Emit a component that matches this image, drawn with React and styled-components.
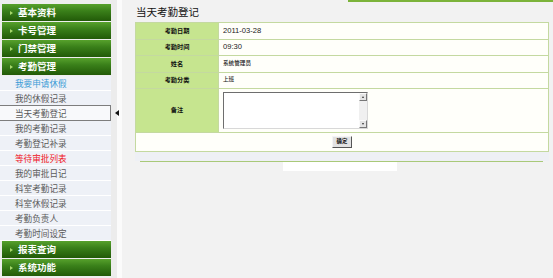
import React from "react";
import styled, { createGlobalStyle } from "styled-components";

const Global = createGlobalStyle`
  html, body { margin: 0; padding: 0; background: #f2f2f2; }
  body { font-family: "Noto Sans CJK SC", "Liberation Sans", sans-serif; }
`;

const Page = styled.div`
  display: flex;
  width: 553px;
  height: 278px;
  overflow: hidden;
  background: #f2f2f2;
`;

const Sidebar = styled.div`
  width: 111px;
  flex: none;
  padding-top: 4px;
  background: #eeeeee;
  display: flex;
  flex-direction: column;
`;

const Header = styled.div`
  height: 17px;
  margin-bottom: 1px;
  margin-left: 2px;
  display: flex;
  align-items: center;
  gap: 5px;
  padding-left: 8px;
  background: linear-gradient(to bottom, #57a12c 0%, #3a801a 40%, #225a08 100%);
  color: #fff;
  font-size: 9.5px;
  font-weight: 700;
  line-height: 1;
`;

const Bullet = styled.span`
  width: 0;
  height: 0;
  border-top: 2.5px solid transparent;
  border-bottom: 2.5px solid transparent;
  border-left: 3px solid #a7d86b;
`;

const ItemList = styled.div`
  display: flex;
  flex-direction: column;
`;

const Item = styled.div`
  height: 14px;
  padding-left: 15px;
  display: flex;
  align-items: center;
  font-size: 8.6px;
  line-height: 1;
  color: ${(p) => p.$color || "#5a5a5a"};
  background: ${(p) => (p.$active ? "#f8f9fb" : "#eef1f7")};
  border-bottom: 1px solid ${(p) => (p.$active ? "#7d7d7d" : "#ffffff")};
  border-top: ${(p) => (p.$active ? "1px solid #7d7d7d" : "none")};
  border-right: ${(p) => (p.$active ? "1px solid #7d7d7d" : "none")};
  margin-top: ${(p) => (p.$active ? "-1px" : "0")};
  box-sizing: content-box;
`;

const Splitter = styled.div`
  width: 11px;
  flex: none;
  display: flex;
  background: linear-gradient(to right, #ececec 0 6px, #fbfbfb 6px 100%);
  position: relative;
`;

const Arrow = styled.span`
  position: absolute;
  left: 4px;
  top: 110px;
  width: 0;
  height: 0;
  border-top: 3px solid transparent;
  border-bottom: 3px solid transparent;
  border-right: 4px solid #111;
`;

const Main = styled.div`
  flex: 1;
  display: flex;
  flex-direction: column;
  padding-right: 4px;
`;

const TopBar = styled.div`
  height: 2px;
  display: flex;
  justify-content: flex-end;
  margin-right: -4px;
`;

const TopGreen = styled.div`
  width: 205px;
  background: #7cb33a;
`;

const Title = styled.div`
  height: 20px;
  padding-left: 14px;
  display: flex;
  align-items: center;
  font-size: 10.5px;
  color: #111;
  line-height: 1;
`;

const Table = styled.div`
  margin-left: 13px;
  border: 1px solid #c4d9a0;
  display: grid;
  grid-template-columns: 82px 1fr;
  background: #c4d9a0;
  gap: 1px;
`;

const Label = styled.div`
  height: ${(p) => p.$h || 15.5}px;
  background: #c6e58f;
  display: flex;
  align-items: center;
  justify-content: center;
  font-size: 6.2px;
  font-weight: 700;
  color: #111;
  line-height: 1;
`;

const Value = styled.div`
  height: ${(p) => p.$h || 15.5}px;
  background: #fffffa;
  display: flex;
  align-items: center;
  padding-left: 4px;
  font-size: ${(p) => (p.$latin ? "7.6px" : "5.6px")};
  font-weight: ${(p) => (p.$latin ? 400 : 500)};
  font-family: ${(p) => (p.$latin ? '"Liberation Sans", sans-serif' : '"Noto Sans CJK SC", sans-serif')};
  color: #222;
  line-height: 1;
`;

const ButtonRow = styled.div`
  grid-column: 1 / -1;
  height: 18px;
  background: #fffffa;
  display: flex;
  align-items: center;
  justify-content: center;
`;

const Button = styled.div`
  width: 18px;
  height: 10px;
  background: #e2e2e2;
  border: 1px solid;
  border-color: #f4f4f4 #555 #555 #f4f4f4;
  font-size: 5.4px;
  font-weight: 700;
  color: #111;
  display: flex;
  align-items: center;
  justify-content: center;
  line-height: 1;
`;

const TextArea = styled.div`
  width: 143px;
  height: 35px;
  border: 1px solid;
  border-color: #6e6e6e #d8d8d8 #d8d8d8 #6e6e6e;
  background: #fff;
  display: flex;
  justify-content: flex-end;
`;

const Scroll = styled.div`
  width: 8px;
  display: flex;
  flex-direction: column;
  justify-content: space-between;
  background: #f0f0f0;
`;

const ScrollBtn = styled.div`
  height: 8px;
  background: #e4e4e4;
  border: 1px solid;
  border-color: #fafafa #777 #777 #fafafa;
  box-sizing: border-box;
  display: flex;
  align-items: center;
  justify-content: center;
  &::after {
    content: "";
    border-left: 1.5px solid transparent;
    border-right: 1.5px solid transparent;
    ${(p) => (p.$down ? "border-top: 2px solid #333;" : "border-bottom: 2px solid #333;")}
  }
`;

const Band = styled.div`
  height: 9px;
  margin-left: 13px;
  background: #eef0f5;
`;

const Rule = styled.div`
  height: 1px;
  margin-left: 18px;
  margin-right: 6px;
  background: #a9c979;
`;

const Footer = styled.div`
  width: 114px;
  height: 9px;
  margin-left: 161px;
  background: #ffffff;
`;

const groupsTop = ["基本资料", "卡号管理", "门禁管理", "考勤管理"];
const items = [
  { t: "我要申请休假", c: "#3a9bd6" },
  { t: "我的休假记录" },
  { t: "当天考勤登记", active: true },
  { t: "我的考勤记录" },
  { t: "考勤登记补录" },
  { t: "等待审批列表", c: "#f0141e" },
  { t: "我的审批日记" },
  { t: "科室考勤记录" },
  { t: "科室休假记录" },
  { t: "考勤负责人" },
  { t: "考勤时间设定" },
];
const groupsBottom = ["报表查询", "系统功能"];

const rows = [
  { l: "考勤日期", v: "2011-03-28", latin: true },
  { l: "考勤时间", v: "09:30", latin: true },
  { l: "姓名", v: "系统管理员" },
  { l: "考勤分类", v: "上班" },
];

export default function App() {
  return (
    <>
      <Global />
      <Page>
        <Sidebar>
          {groupsTop.map((g) => (
            <Header key={g}>
              <Bullet />
              {g}
            </Header>
          ))}
          <ItemList>
            {items.map((it) => (
              <Item key={it.t} $color={it.c} $active={it.active}>
                {it.t}
              </Item>
            ))}
          </ItemList>
          {groupsBottom.map((g) => (
            <Header key={g}>
              <Bullet />
              {g}
            </Header>
          ))}
        </Sidebar>
        <Splitter>
          <Arrow />
        </Splitter>
        <Main>
          <TopBar>
            <TopGreen />
          </TopBar>
          <Title>当天考勤登记</Title>
          <Table>
            {rows.map((r) => (
              <React.Fragment key={r.l}>
                <Label>{r.l}</Label>
                <Value $latin={r.latin}>{r.v}</Value>
              </React.Fragment>
            ))}
            <Label $h={43}>备注</Label>
            <Value $h={43}>
              <TextArea>
                <Scroll>
                  <ScrollBtn />
                  <ScrollBtn $down />
                </Scroll>
              </TextArea>
            </Value>
            <ButtonRow>
              <Button>确定</Button>
            </ButtonRow>
          </Table>
          <Band />
          <Rule />
          <Footer />
        </Main>
      </Page>
    </>
  );
}
